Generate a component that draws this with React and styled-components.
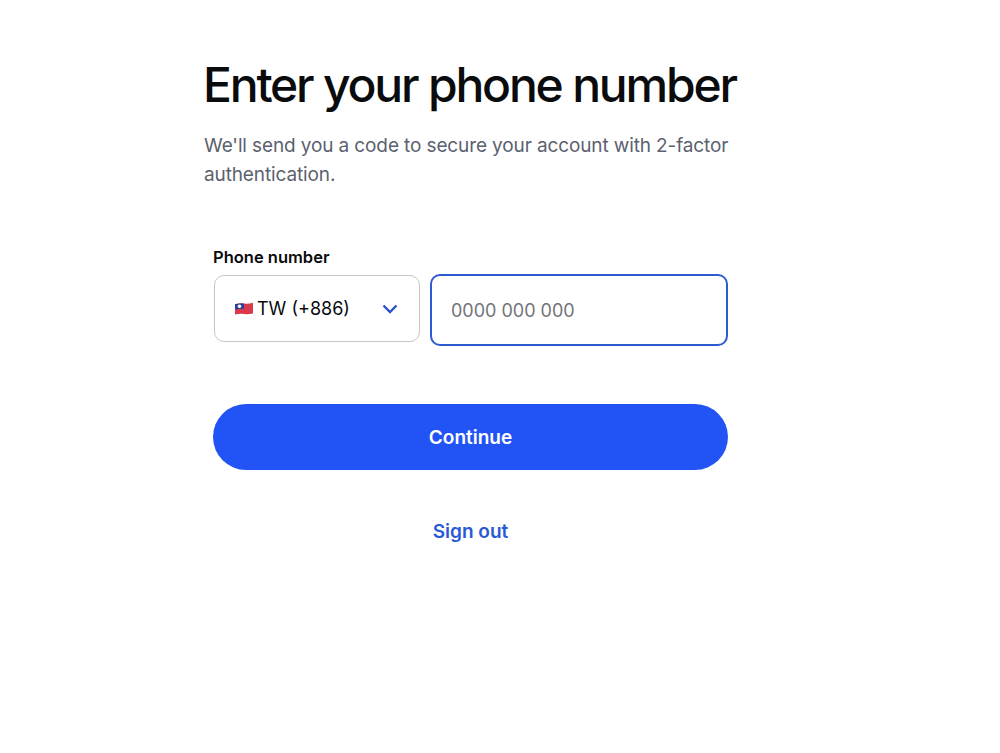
import React from "react";
import styled, { createGlobalStyle } from "styled-components";

const Global = createGlobalStyle`
  html, body { margin: 0; padding: 0; background: #fff; }
  body { font-family: Inter, "Liberation Sans", sans-serif; }
`;

const Page = styled.main`
  width: 1000px;
  height: 753px;
  box-sizing: border-box;
  padding: 57px 0 0 204px;
  overflow: hidden;
`;

const Title = styled.h1`
  margin: 0 0 0 -1px;
  font-size: 48px;
  line-height: 56px;
  font-weight: 450;
  letter-spacing: -2.2px;
  color: #0a0b0d;
  white-space: nowrap;
`;

const Lead = styled.p`
  margin: 18px 0 0;
  width: 540px;
  font-size: 19px;
  line-height: 29px;
  letter-spacing: -0.12px;
  color: #5b616e;
`;

const Form = styled.form`
  margin: 58px 0 0 9px;
  width: 515px;
  display: flex;
  flex-direction: column;
`;

const Label = styled.label`
  font-size: 16.5px;
  line-height: 20px;
  font-weight: 600;
  color: #0a0b0d;
`;

const Fields = styled.div`
  margin-top: 7px;
  display: flex;
  align-items: flex-start;
  gap: 10px;
`;

const CountrySelect = styled.div`
  margin: 1px 0 0 1px;
  width: 206px;
  height: 67px;
  box-sizing: border-box;
  border: 1px solid #c4c6ca;
  border-radius: 10px;
  padding: 0 21px 0 20px;
  display: flex;
  align-items: center;
  font-size: 18px;
  color: #0a0b0d;
`;

const CountryText = styled.span`
  margin-left: 4px;
  flex: 1;
`;

const PhoneField = styled.div`
  width: 298px;
  height: 72px;
  box-sizing: border-box;
  border: 2px solid #2f5bd0;
  border-radius: 10px;
  padding: 0 19px;
  display: flex;
  align-items: center;
  font-size: 18px;
  color: #71747a;
`;

const Continue = styled.button`
  margin-top: 58px;
  height: 66px;
  width: 515px;
  border: 0;
  border-radius: 33px;
  background: #2253f5;
  color: #fff;
  font: 600 19px Inter, "Liberation Sans", sans-serif;
`;

const SignOut = styled.a`
  margin-top: 50px;
  align-self: center;
  font-size: 19px;
  line-height: 24px;
  font-weight: 600;
  color: #2a59d6;
`;

const Flag = () => (
  <svg width="18" height="14" viewBox="0 0 18 14" aria-hidden="true">
    <path d="M0 2.2 Q5 .8 9 1.6 T18 .8 V11.6 Q13 12.6 9 12 T0 12.6 Z" fill="#d9394a" />
    <path d="M0 2.2 Q4 1 9 1.6 V7 Q4 6.6 0 7.4 Z" fill="#2b3f9e" />
    <circle cx="4.5" cy="4.2" r="1.8" fill="#fff" />
  </svg>
);

const Chevron = () => (
  <svg width="16" height="10" viewBox="0 0 16 10" fill="none" aria-hidden="true">
    <path d="M1.5 1.5 8 8l6.5-6.5" stroke="#2a52c9" strokeWidth="2.4" />
  </svg>
);

export default function App() {
  return (
    <Page>
      <Global />
      <Title>Enter your phone number</Title>
      <Lead>We'll send you a code to secure your account with 2-factor authentication.</Lead>
      <Form>
        <Label>Phone number</Label>
        <Fields>
          <CountrySelect>
            <Flag />
            <CountryText>TW (+886)</CountryText>
            <Chevron />
          </CountrySelect>
          <PhoneField>0000 000 000</PhoneField>
        </Fields>
        <Continue type="button">Continue</Continue>
        <SignOut>Sign out</SignOut>
      </Form>
    </Page>
  );
}
